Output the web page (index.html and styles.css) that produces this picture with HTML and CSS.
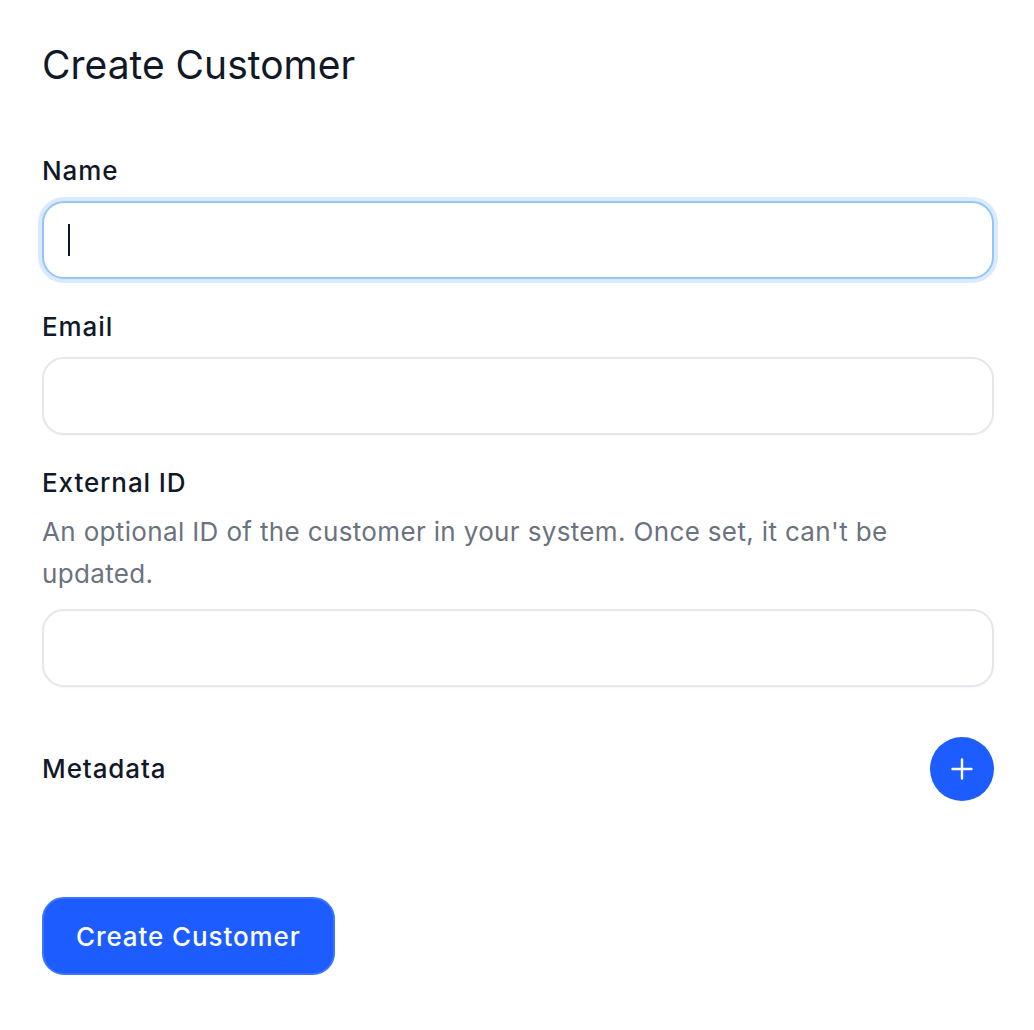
FILE: index.html
```html
<!DOCTYPE html>
<html>
<head>
<meta charset="utf-8">
<link rel="stylesheet" href="styles.css">
</head>
<body>
<div class="page">
  <h1 class="title">Create Customer</h1>
  <form class="form">
    <div class="field">
      <label class="label">Name</label>
      <div class="input input-focus"><span class="caret"></span></div>
    </div>
    <div class="field">
      <label class="label">Email</label>
      <div class="input"></div>
    </div>
    <div class="field">
      <label class="label">External ID</label>
      <p class="desc">An optional ID of the customer in your system. Once set, it can't be updated.</p>
      <div class="input"></div>
    </div>
    <div class="meta-row">
      <span class="label">Metadata</span>
      <button type="button" class="add-btn" aria-label="Add">
        <svg width="22" height="22" viewBox="0 0 22 22"><path d="M11 1.5v19M1.5 11h19" stroke="#fff" stroke-width="2.4" stroke-linecap="round"/></svg>
      </button>
    </div>
    <div class="actions">
      <button type="button" class="primary">Create Customer</button>
    </div>
  </form>
</div>
</body>
</html>
```
FILE: styles.css
```css
* { box-sizing: border-box; }
body {
  margin: 0;
  background: #fff;
  font-family: Inter, "Noto Sans", sans-serif;
  color: #111827;
}
.page {
  padding: 40px 40px 40px 42px;
}
.title {
  margin: 0;
  font-size: 39px;
  font-weight: 400;
  line-height: 50px;
  color: #111827;
}
.form {
  margin-top: 63px;
  display: flex;
  flex-direction: column;
}
.field {
  display: flex;
  flex-direction: column;
  margin-bottom: 30px;
}
.label {
  font-size: 26px;
  font-weight: 500;
  line-height: 36px;
  letter-spacing: 0.9px;
  color: #111827;
}
.field .label { margin-bottom: 12px; }
.desc {
  width: 952px;
  margin: -2px 0 14px;
  font-size: 26px;
  line-height: 42px;
  letter-spacing: 0.35px;
  color: #6b7280;
}
.input {
  width: 952px;
  height: 78px;
  border: 2px solid #e5e7eb;
  border-radius: 22px;
  background: #fff;
  box-shadow: 0 1px 2px rgba(0,0,0,0.04);
  display: flex;
  align-items: center;
  padding-left: 24px;
}
.input-focus {
  border-color: #93c5fd;
  box-shadow: 0 0 0 4px #dbeafe;
}
.caret {
  width: 2px;
  height: 32px;
  background: #111827;
}
.meta-row {
  display: flex;
  align-items: center;
  justify-content: space-between;
  width: 952px;
  margin-top: 20px;
}
.add-btn {
  width: 64px;
  height: 64px;
  border-radius: 50%;
  border: none;
  background: #1d5dff;
  display: flex;
  align-items: center;
  justify-content: center;
  padding: 0;
}
.actions {
  margin-top: 96px;
}
.primary {
  height: 78px;
  padding: 0 32px;
  border: 2px solid #3b73ff;
  border-radius: 22px;
  background: #1d5dff;
  color: #fff;
  font-family: Inter, "Noto Sans", sans-serif;
  font-size: 26px;
  font-weight: 500;
  letter-spacing: 0.9px;
}
```
